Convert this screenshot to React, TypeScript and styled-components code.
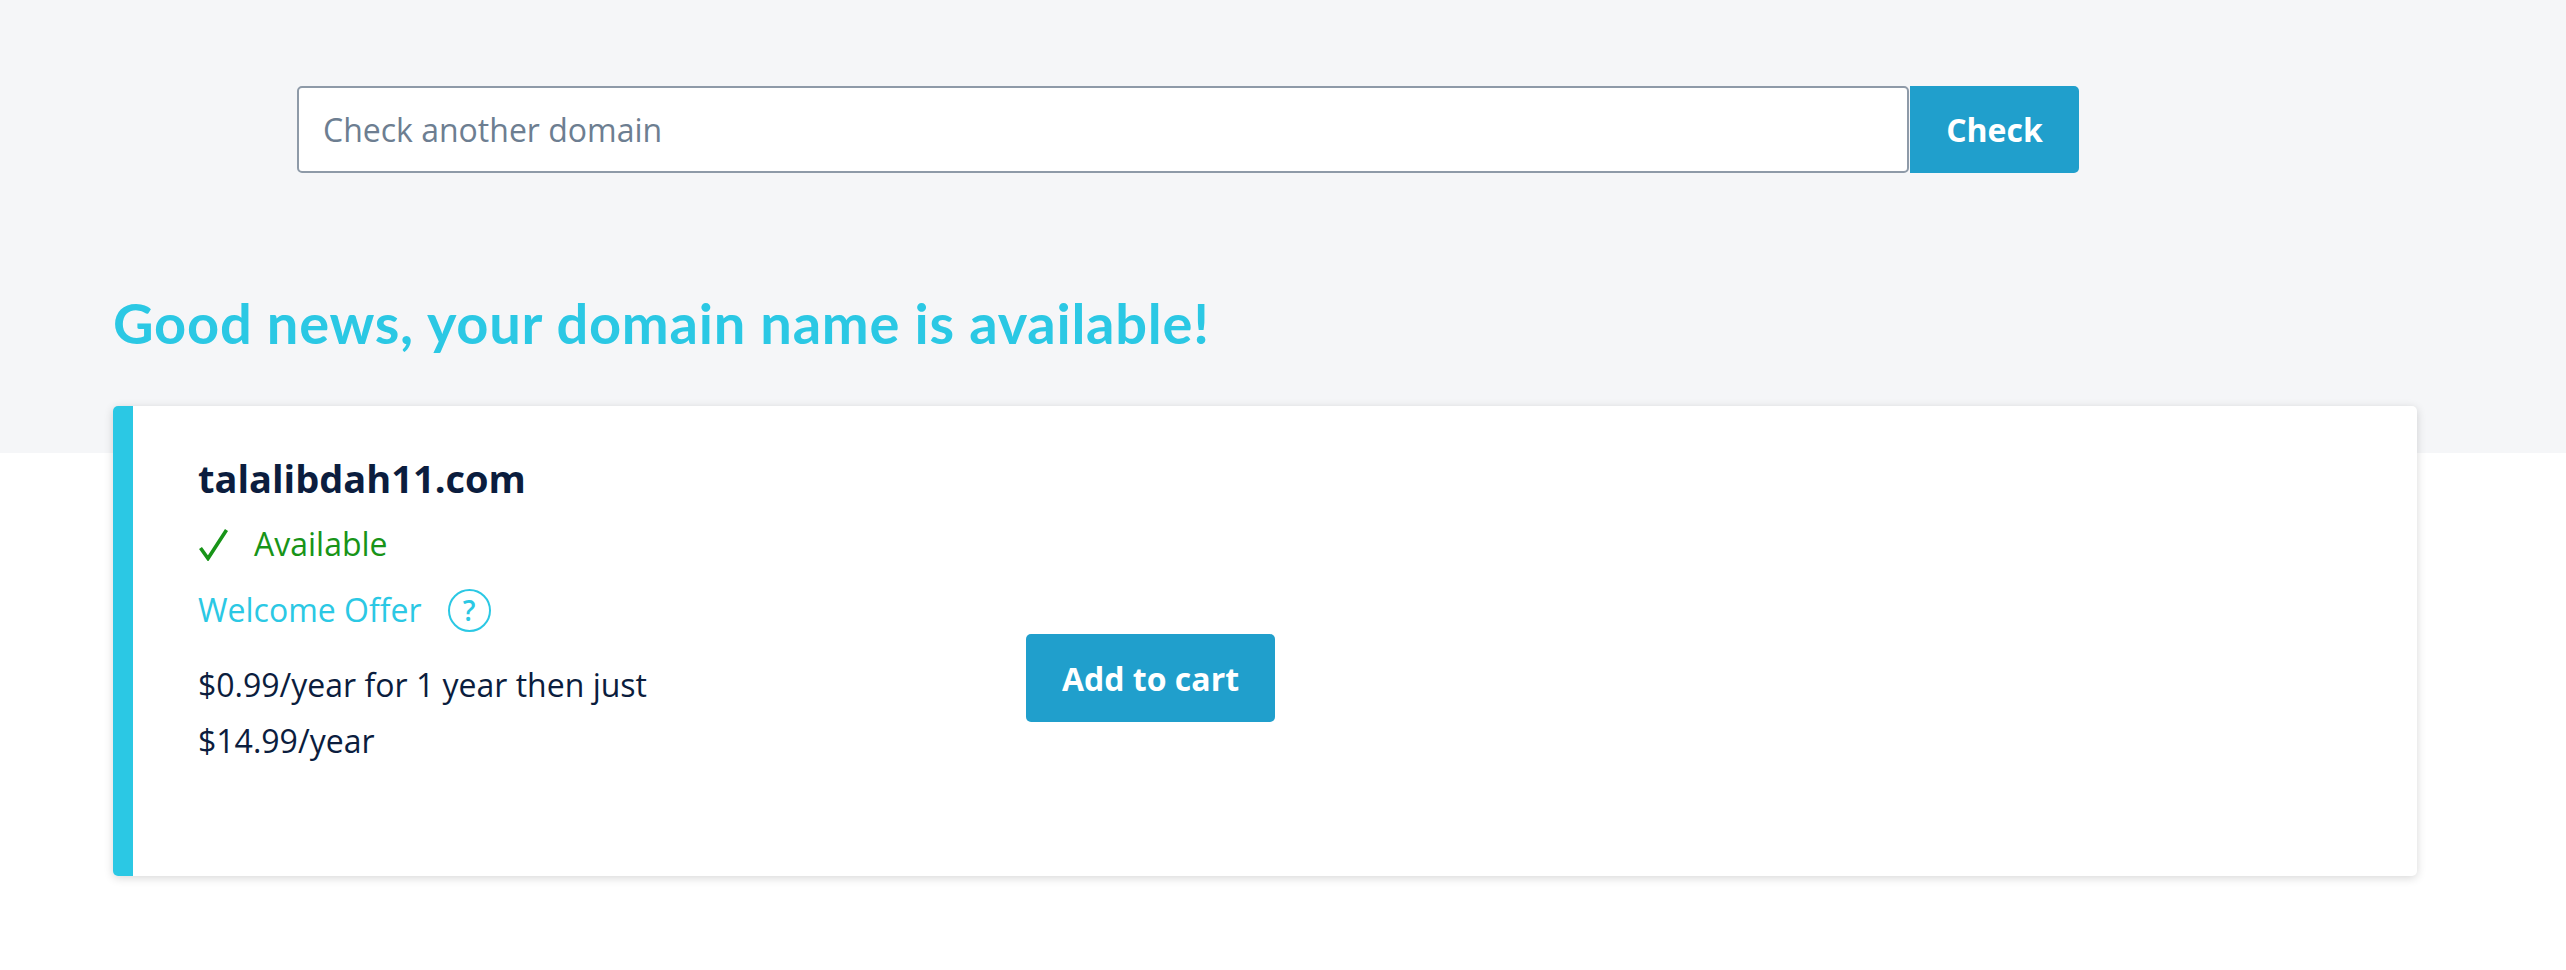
import React from "react";
import styled, { createGlobalStyle } from "styled-components";

const GlobalStyle = createGlobalStyle`
  html, body {
    margin: 0;
    padding: 0;
    background: #ffffff;
    font-family: "Open Sans", "Noto Sans", sans-serif;
  }
  * { box-sizing: border-box; }
`;

const Page = styled.div`
  width: 2566px;
  min-height: 970px;
  background: #ffffff;
`;

const Hero = styled.section`
  background: #f5f6f8;
  padding: 86px 0 97px 113px;
`;

const SearchForm = styled.form`
  display: flex;
  margin-left: 184px;
  width: 1782px;
  height: 87px;
`;

const SearchInput = styled.input`
  flex: 1;
  height: 100%;
  border: 2px solid #8e9aa8;
  border-radius: 5px;
  background: #ffffff;
  padding: 0 24px;
  font-family: "Open Sans", sans-serif;
  font-size: 32px;
  color: #0b1d3e;
  outline: none;
  &::placeholder {
    color: #6d7e91;
  }
`;

const PrimaryButton = styled.button<{ $w: number; $h: number; $square?: boolean }>`
  width: ${(p) => p.$w}px;
  height: ${(p) => p.$h}px;
  border: none;
  border-radius: ${(p) => (p.$square ? "0 5px 5px 0" : "5px")};
  background: #209fcc;
  color: #ffffff;
  font-family: "Open Sans", sans-serif;
  font-weight: 700;
  font-size: 32px;
  cursor: pointer;
  flex-shrink: 0;
  margin-left: ${(p) => (p.$square ? "1px" : "0")};
`;

const Heading = styled.h1`
  margin: 116px 0 0 0;
  font-family: Lato, sans-serif;
  font-weight: 700;
  font-size: 56px;
  line-height: 67px;
  letter-spacing: 0.75px;
  color: #2bc8e4;
`;

const CardArea = styled.section`
  padding-left: 113px;
  margin-top: -47px;
`;

const Card = styled.article`
  display: flex;
  width: 2304px;
  height: 470px;
  background: #ffffff;
  border-radius: 5px;
  overflow: hidden;
  box-shadow: 0 2px 10px rgba(0, 0, 0, 0.16);
`;

const Strip = styled.div`
  width: 20px;
  flex-shrink: 0;
  background: #2bc8e4;
`;

const CardBody = styled.div`
  display: flex;
  padding: 50px 0 0 65px;
`;

const Info = styled.div`
  width: 828px;
  display: flex;
  flex-direction: column;
`;

const DomainName = styled.h2`
  margin: 0;
  font-family: "Open Sans", sans-serif;
  font-weight: 700;
  font-size: 38px;
  line-height: 44px;
  color: #0b1d3e;
`;

const StatusRow = styled.div<{ $color: string; $gap: number; $mt: number }>`
  display: flex;
  align-items: center;
  gap: ${(p) => p.$gap}px;
  margin-top: ${(p) => p.$mt}px;
  height: 44px;
  font-size: 32px;
  line-height: 44px;
  color: ${(p) => p.$color};
`;

const HelpCircle = styled.span`
  width: 43px;
  height: 43px;
  border: 2px solid #2bc8e4;
  border-radius: 50%;
  display: inline-flex;
  align-items: center;
  justify-content: center;
  font-size: 28px;
  font-weight: 600;
  line-height: 1;
  color: #2bc8e4;
`;

const Price = styled.p`
  margin: 25px 0 0 0;
  font-size: 32px;
  line-height: 56px;
  color: #0b1d3e;
`;

const Actions = styled.div`
  padding-top: 178px;
`;

const CheckIcon = () => (
  <svg width="31" height="33" viewBox="0 0 31 33" fill="none">
    <path d="M2.5 20 L10 30.5 L28.5 2" stroke="#189418" strokeWidth="3.6" strokeLinecap="butt" strokeLinejoin="miter" />
  </svg>
);

export default function App() {
  return (
    <>
      <GlobalStyle />
      <Page>
        <Hero>
          <SearchForm onSubmit={(e) => e.preventDefault()}>
            <SearchInput placeholder="Check another domain" />
            <PrimaryButton type="submit" $w={169} $h={87} $square>
              Check
            </PrimaryButton>
          </SearchForm>
          <Heading>Good news, your domain name is available!</Heading>
        </Hero>
        <CardArea>
          <Card>
            <Strip />
            <CardBody>
              <Info>
                <DomainName>talalibdah11.com</DomainName>
                <StatusRow $color="#189418" $gap={25} $mt={22}>
                  <CheckIcon />
                  <span>Available</span>
                </StatusRow>
                <StatusRow $color="#2bc8e4" $gap={26} $mt={22}>
                  <span>Welcome Offer</span>
                  <HelpCircle>?</HelpCircle>
                </StatusRow>
                <Price>
                  $0.99/year for 1 year then just
                  <br />
                  $14.99/year
                </Price>
              </Info>
              <Actions>
                <PrimaryButton type="button" $w={249} $h={88}>
                  Add to cart
                </PrimaryButton>
              </Actions>
            </CardBody>
          </Card>
        </CardArea>
      </Page>
    </>
  );
}
